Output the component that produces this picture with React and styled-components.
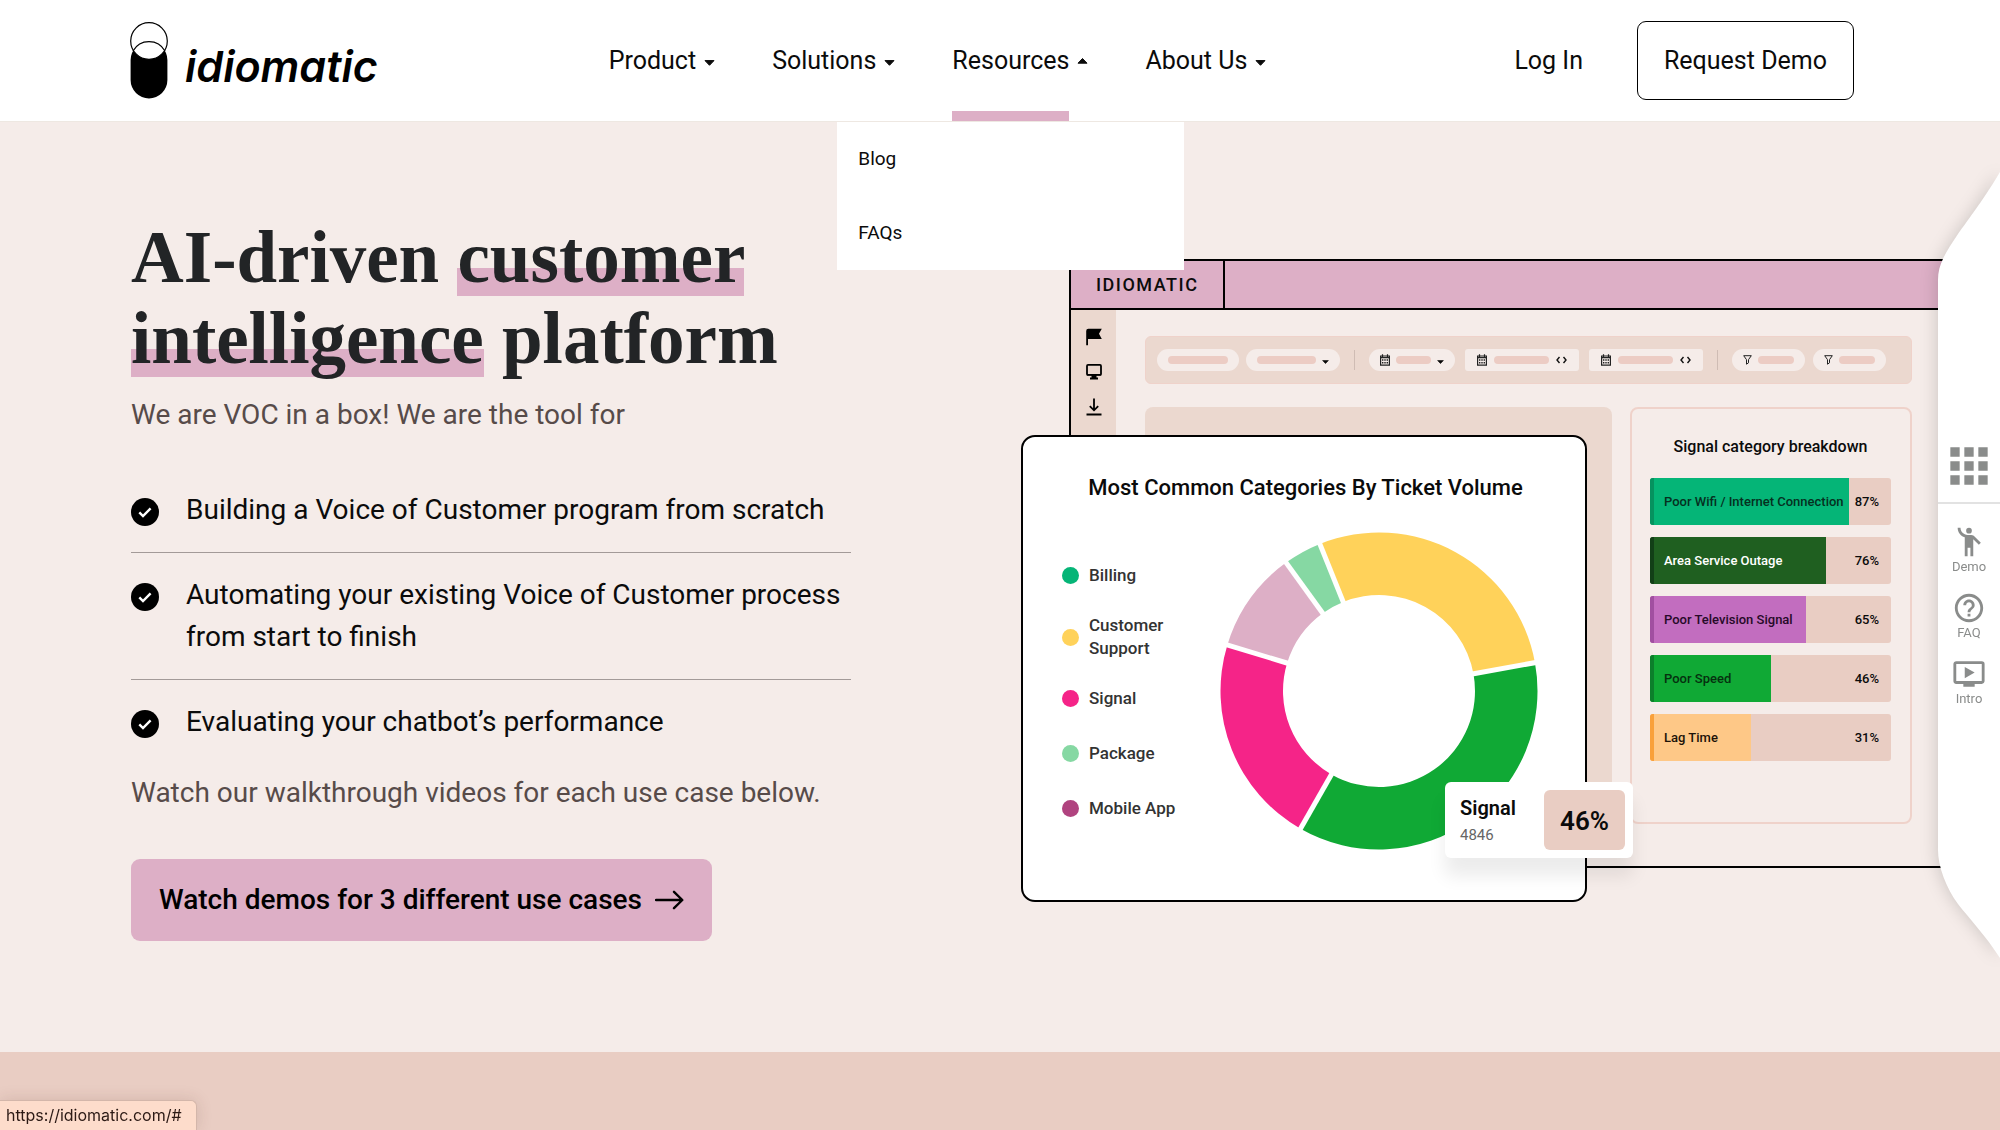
import React, { useState } from 'react';
import styled, { createGlobalStyle, css } from 'styled-components';
import { MdApps, MdEmojiPeople, MdHelpOutline, MdOndemandVideo } from 'react-icons/md';

const colors = {
    ink: '#0b0b0b',
    heading: '#222426',
    muted: '#574b49',
    pink: '#ddafc6',
    blush: '#f5ece9',
    sand: '#ebd8cf',
    rose: '#e9cdc3',
    roseLine: '#efd2ca',
    widget: '#8a8c8b',
};

const GlobalStyle = createGlobalStyle`
    *, *::before, *::after {
        box-sizing: border-box;
    }
    body {
        margin: 0;
        font-family: Roboto, sans-serif;
        color: ${colors.ink};
        background: ${colors.rose};
        overflow-x: hidden;
    }
    button {
        font: inherit;
        color: inherit;
        background: none;
        border: 0;
        padding: 0;
        cursor: pointer;
    }
    a {
        color: inherit;
        text-decoration: none;
    }
    svg {
        display: block;
    }
`;

const Page = styled.div`
    min-height: 100vh;
    display: flex;
    flex-direction: column;
`;

/* header */
const Header = styled.header`
    display: flex;
    align-items: center;
    height: 122px;
    padding: 0 146px 0 130px;
    background: #fff;
    border-bottom: 1px solid #eee8e2;
`;
const Logo = styled.a`
    display: flex;
    align-items: center;
    gap: 17px;
`;
const LogoText = styled.span`
    font-family: Inter, sans-serif;
    font-size: 43px;
    font-weight: 600;
    font-style: italic;
    font-feature-settings: 'cv11';
    line-height: 64px;
    padding-top: 11px;
    color: #000;
`;
const Nav = styled.nav`
    display: flex;
    align-self: stretch;
    gap: 57px;
    margin-left: 231px;
`;
const NavItem = styled.div`
    position: relative;
    display: flex;
`;
const NavButton = styled.button`
    display: flex;
    align-items: center;
    gap: 8px;
    font-size: 25px;
`;
const NavLabel = styled.span`
    display: flex;
    align-items: center;
    height: 121px;
    border-top: 10px solid transparent;
    border-bottom: 10px solid transparent;
    ${props => props.$open && css`
        border-bottom-color: ${colors.pink};
    `}
`;
const Dropdown = styled.div`
    position: absolute;
    z-index: 5;
    top: 122px;
    left: -115px;
    width: 347px;
    display: flex;
    flex-direction: column;
    background: #fff;
`;
const DropdownLink = styled.a`
    padding: 0 21px;
    font-size: 19px;
    line-height: 74px;
`;
const Actions = styled.div`
    display: flex;
    align-items: center;
    gap: 54px;
    margin-left: auto;
    font-size: 25px;
`;
const DemoLink = styled.a`
    padding: 0 26px;
    line-height: 77px;
    border: 1px solid #000;
    border-radius: 9px;
`;

/* hero */
const Hero = styled.main`
    display: flex;
    align-items: flex-start;
    padding: 95px 0 111px 131px;
    background: ${colors.blush};
    overflow: hidden;
`;
const Intro = styled.section`
    flex: 0 0 720px;
    font-size: 28px;
    line-height: 42px;
`;
const Title = styled.h1`
    margin: 0;
    font-family: 'Liberation Serif', serif;
    font-size: 73px;
    font-weight: 700;
    line-height: 81px;
    color: ${colors.heading};
`;
const Mark = styled.span`
    background: linear-gradient(transparent 63%, ${colors.pink} 63%, ${colors.pink} 97%, transparent 97%);
`;
const Lead = styled.p`
    margin: ${props => props.$top}px 0 0;
    color: ${colors.muted};
`;
const CheckList = styled.ul`
    margin: 32px 0 0;
    padding: 0;
    list-style: none;
`;
const CheckItem = styled.li`
    display: flex;
    gap: 27px;
    padding: 21px 0;
    border-bottom: 1px solid #a39a98;
    svg {
        flex: none;
        margin-top: 9px;
    }
    &:last-child {
        border-bottom: 0;
        padding-bottom: 0;
    }
`;
const WatchLink = styled.a`
    display: inline-flex;
    align-items: center;
    gap: 13px;
    margin-top: 45px;
    padding: 20px 28px;
    font-weight: 500;
    color: #000;
    background: ${colors.pink};
    border-radius: 9px;
`;

/* product preview */
const Preview = styled.section`
    position: relative;
    flex: 1;
    margin: 42px 0 0 170px;
    padding-left: 48px;
`;
const Window = styled.div`
    border: 2px solid #000;
    border-right: 0;
`;
const TitleBar = styled.div`
    height: 49px;
    background: ${colors.pink};
    border-bottom: 2px solid #000;
`;
const TitleTab = styled.div`
    width: 154px;
    padding-left: 25px;
    font-size: 18px;
    font-weight: 500;
    letter-spacing: 1.5px;
    line-height: 47px;
    border-right: 2px solid #000;
`;
const WindowBody = styled.div`
    display: flex;
`;
const SideRail = styled.div`
    width: 45px;
    padding-top: 18px;
    display: flex;
    flex-direction: column;
    align-items: center;
    gap: 17px;
    background: ${colors.sand};
`;
const WindowMain = styled.div`
    flex: 1;
    padding: 26px 88px 42px 29px;
`;
const Toolbar = styled.div`
    display: flex;
    align-items: center;
    height: 48px;
    padding: 0 11px;
    background: ${colors.sand};
    border: 1px solid ${colors.roseLine};
    border-radius: 6px;
`;
const PillGroup = styled.div`
    display: flex;
    gap: ${props => props.$gap}px;
`;
const Divider = styled.span`
    width: 1px;
    height: 20px;
    margin: 0 14px;
    background: #cfbcb4;
`;
const Pill = styled.span`
    display: flex;
    align-items: center;
    gap: 6px;
    height: 22px;
    padding: 0 11px;
    background: ${colors.blush};
    border-radius: 11px;
    ${props => props.$square && css`
        gap: 7px;
        padding: 0 12px;
        border-radius: 3px;
    `}
`;
const PillLine = styled.span`
    width: ${props => props.$width}px;
    height: 8px;
    background: #ecccc4;
    border-radius: 4px;
`;
const Panels = styled.div`
    display: flex;
    gap: 18px;
    margin-top: 23px;
`;
const BlankPanel = styled.div`
    flex: 1;
    background: ${colors.sand};
    border-radius: 8px;
`;
const Breakdown = styled.div`
    width: 282px;
    padding: 24px 19px 61px 18px;
    border: 2px solid ${colors.roseLine};
    border-radius: 8px;
`;
const BreakdownTitle = styled.h3`
    margin: 0 0 17px;
    font-size: 16px;
    font-weight: 500;
    line-height: 28px;
    text-align: center;
`;
const Bars = styled.div`
    display: flex;
    flex-direction: column;
    gap: 12px;
`;
const BarRow = styled.div`
    display: flex;
    justify-content: space-between;
    align-items: center;
    height: 47px;
    padding-right: 12px;
    font-size: 13px;
    font-weight: 500;
    background: ${colors.rose};
    border-radius: 3px;
    overflow: hidden;
`;
const BarFill = styled.div`
    flex: none;
    padding-left: 10px;
    line-height: 47px;
    white-space: nowrap;
    color: ${props => props.$text};
    background: ${props => props.$color};
    border-left: 4px solid ${props => props.$edge};
`;

/* chart card */
const ChartCard = styled.div`
    position: absolute;
    top: 176px;
    left: 0;
    width: 566px;
    padding: 35px 36px 50px 39px;
    background: #fff;
    border: 2px solid #000;
    border-radius: 14px;
`;
const CardTitle = styled.h2`
    margin: 0;
    font-size: 22px;
    font-weight: 500;
    line-height: 32px;
    text-align: center;
    white-space: nowrap;
`;
const ChartRow = styled.div`
    display: flex;
    justify-content: space-between;
    margin-top: 28px;
    padding-right: 11px;
`;
const Legend = styled.ul`
    display: flex;
    flex-direction: column;
    gap: 22px;
    margin: 0;
    padding: 27px 0 0;
    list-style: none;
`;
const LegendItem = styled.li`
    display: flex;
    align-items: center;
    gap: 10px;
    width: 132px;
    min-height: 33px;
    font-size: 17px;
    font-weight: 500;
    line-height: 23px;
    color: #333;
    &::before {
        content: '';
        flex: none;
        width: 17px;
        height: 17px;
        border-radius: 50%;
        background: ${props => props.$color};
    }
`;
const Callout = styled.div`
    position: absolute;
    top: 523px;
    left: 424px;
    display: flex;
    justify-content: space-between;
    width: 188px;
    padding: 8px 8px 8px 15px;
    background: #fff;
    border-radius: 6px;
    box-shadow: 0 18px 18px rgba(0, 0, 0, 0.08);
`;
const CalloutText = styled.div`
    padding-top: 5px;
    font-size: 20px;
    font-weight: 600;
    line-height: 26px;
    small {
        display: block;
        padding-top: 1px;
        font-size: 15px;
        font-weight: 400;
        color: #666;
    }
`;
const CalloutValue = styled.div`
    width: 81px;
    padding-top: 2px;
    font-size: 26px;
    font-weight: 600;
    line-height: 58px;
    text-align: center;
    background: ${colors.rose};
    border-radius: 6px;
`;

/* floating helper */
const Helper = styled.aside`
    position: fixed;
    z-index: 6;
    top: 172px;
    right: 0;
    width: 62px;
    color: ${colors.widget};
    filter: drop-shadow(-2px 0 8px rgba(0, 0, 0, 0.15));
`;
const HelperBody = styled.div`
    display: flex;
    flex-direction: column;
    background: #fff;
    padding: 158px 0 127px;
`;
const AppsButton = styled.button`
    display: flex;
    justify-content: center;
    padding-bottom: 8px;
    margin-bottom: 21px;
    border-bottom: 2px solid #e2e2e2;
`;
const HelperButton = styled.button`
    display: flex;
    flex-direction: column;
    align-items: center;
    height: 66px;
    font-size: 13px;
    line-height: 16px;
`;
const StatusBar = styled.div`
    position: fixed;
    z-index: 7;
    left: 0;
    bottom: 0;
    padding: 0 14px 0 6px;
    font-family: Inter, sans-serif;
    font-size: 16px;
    line-height: 29px;
    color: #2c1a15;
    background: #fddccb;
    border: 1px solid #d3b6aa;
    border-width: 1px 1px 0 0;
    border-radius: 0 6px 0 0;
    box-shadow: 0 0 16px rgba(80, 40, 30, 0.15);
`;

const LogoMark = () => (
    <svg width="38" height="77" viewBox="0 0 38 77" aria-hidden="true">
        <path d="M.6 38a18.4 18.4 0 0 1 36.8 0v20a18.4 18.4 0 0 1-36.8 0Z" fill="#000" />
        <circle cx="19" cy="19" r="18.3" fill="#fff" stroke="#000" strokeWidth="1.2" />
        <path d="M3 29A18.3 18.3 0 0 1 35 29" fill="none" stroke="#000" strokeWidth="1.2" />
    </svg>
);

const Caret = ({ up, size = 11 }) => (
    <svg width={size} height={size} viewBox="0 0 11 11" aria-hidden="true">
        {up
            ? <path d="M5.5 3.5 10 8.2H1Z" fill="currentColor" stroke="currentColor" strokeLinejoin="round" />
            : <path d="M5.5 10.3 10 5.6H1Z" fill="currentColor" stroke="currentColor" strokeLinejoin="round" />}
    </svg>
);

const Check = () => (
    <svg width="28" height="28" viewBox="0 0 28 28" aria-hidden="true">
        <circle cx="14" cy="14" r="14" fill="#000" />
        <path d="m8.3 14.3 3.7 3.7 7.6-7.6" fill="none" stroke="#fff" strokeWidth="2.4" />
    </svg>
);

const Arrow = () => (
    <svg width="29" height="20" viewBox="0 0 29 20" aria-hidden="true">
        <path d="M1 10h26M19 1.8 27.3 10 19 18.2" fill="none" stroke="#000" strokeWidth="2.4" strokeLinecap="round" strokeLinejoin="round" />
    </svg>
);

const Calendar = () => (
    <svg width="10" height="12" viewBox="0 0 10 12" aria-hidden="true">
        <path d="M.6 2h8.8v9.2H.6ZM2.5.3V3M7.5.3V3M.6 3.6h8.8" fill="none" stroke="#222" strokeWidth="1.2" />
        <path d="M2 6h6M2 8.7h6" stroke="#222" strokeWidth="1.4" strokeDasharray="1.4 .9" />
    </svg>
);

const Code = () => (
    <svg width="11" height="8" viewBox="0 0 11 8" aria-hidden="true">
        <path d="M3.5 1 1 4l2.5 3M7.5 1 10 4 7.5 7" fill="none" stroke="#111" strokeWidth="1.4" />
    </svg>
);

const Funnel = () => (
    <svg width="9" height="10" viewBox="0 0 9 10" aria-hidden="true">
        <path d="M.7.7h7.6L5.5 4.7v3.1L3.5 9.2V4.7Z" fill="none" stroke="#222" strokeWidth="1" strokeLinejoin="round" />
    </svg>
);

const Flag = () => (
    <svg width="16" height="18" viewBox="0 0 16 18" aria-hidden="true">
        <path d="M.2 17.2V3Q.2.8 2.4.8H15.8L13 5.8l2.800 5.200H2v6.200Z" fill="#000" />
    </svg>
);

const Monitor = () => (
    <svg width="16" height="18" viewBox="0 0 16 18" aria-hidden="true">
        <rect x="1" y="1.9" width="14" height="10" rx="1" fill="none" stroke="#000" strokeWidth="1.8" />
        <path d="M1 11h14v1.500H10.500V14.500H12V16.500H4V14.500H5.500V12.500H1Z" fill="#000" />
    </svg>
);

const Download = () => (
    <svg width="16" height="18" viewBox="0 0 16 18" aria-hidden="true">
        <path d="M8 .5v11M3.8 8.2 8 12.3l4.2-4.1M.5 16.5h15" fill="none" stroke="#000" strokeWidth="1.8" />
    </svg>
);

const slices = [
    { from: -21.9, to: 79.7, color: '#ffd25a' },
    { from: 79.7, to: 209.7, color: '#10a935' },
    { from: 209.7, to: 286.9, color: '#f52488' },
    { from: 286.9, to: 324.1, color: '#ddafc6' },
    { from: 324.1, to: 338.1, color: '#86d8a3' },
];

const point = (angle, r) => {
    const a = angle * Math.PI / 180;
    return `${(159 + r * Math.sin(a)).toFixed(2)} ${(159 - r * Math.cos(a)).toFixed(2)}`;
};

const slicePath = ({ from, to }) => {
    const large = to - from > 180 ? 1 : 0;
    return `M${point(from, 158.5)}A158.5 158.5 0 ${large} 1 ${point(to, 158.5)}L${point(to, 96)}A96 96 0 ${large} 0 ${point(from, 96)}Z`;
};

const Donut = () => (
    <svg width="318" height="318" viewBox="0 0 318 318" role="img" aria-label="Ticket volume by category">
        {slices.map(s => <path key={s.color} d={slicePath(s)} fill={s.color} />)}
        {slices.map(s => (
            <path key={s.color} d={`M${point(s.from, 92)}L${point(s.from, 164)}`} stroke="#fff" strokeWidth="5" />
        ))}
    </svg>
);

const menu = ['Product', 'Solutions', 'Resources', 'About Us'];

const legend = [
    ['Billing', '#05b577'],
    ['Customer Support', '#ffd25a'],
    ['Signal', '#f52488'],
    ['Package', '#86d8a3'],
    ['Mobile App', '#b0437f'],
];

const signals = [
    { label: 'Poor Wifi / Internet Connection', value: '87%', width: 87, color: '#05b577', edge: '#06925f', text: '#06301f' },
    { label: 'Area Service Outage', value: '76%', width: 77, color: '#1f5f20', edge: '#123f17', text: '#fff' },
    { label: 'Poor Television Signal', value: '65%', width: 68, color: '#c26dbf', edge: '#a04fa0', text: '#260a28' },
    { label: 'Poor Speed', value: '46%', width: 53, color: '#10a935', edge: '#0c7f2b', text: '#06300f' },
    { label: 'Lag Time', value: '31%', width: 44, color: '#fec887', edge: '#f9a03a', text: '#1c1208' },
];

const SiteHeader = () => {
    const [open, setOpen] = useState('Resources');
    return (
        <Header>
            <Logo href="#" aria-label="idiomatic">
                <LogoMark />
                <LogoText>idiomatic</LogoText>
            </Logo>
            <Nav>
                {menu.map(name => (
                    <NavItem key={name}>
                        <NavButton aria-expanded={open === name} onClick={() => setOpen(open === name ? '' : name)}>
                            <NavLabel $open={open === name}>{name}</NavLabel>
                            <Caret up={open === name} />
                        </NavButton>
                        {name === 'Resources' && open === name && (
                            <Dropdown>
                                <DropdownLink href="#">Blog</DropdownLink>
                                <DropdownLink href="#">FAQs</DropdownLink>
                            </Dropdown>
                        )}
                    </NavItem>
                ))}
            </Nav>
            <Actions>
                <a href="#">Log In</a>
                <DemoLink href="#">Request Demo</DemoLink>
            </Actions>
        </Header>
    );
};

const FilterBar = () => (
    <Toolbar>
        <PillGroup $gap={7}>
            <Pill><PillLine $width={60} /></Pill>
            <Pill><PillLine $width={59} /><Caret size={7} /></Pill>
        </PillGroup>
        <Divider />
        <PillGroup $gap={10}>
            <Pill><Calendar /><PillLine $width={35} /><Caret size={7} /></Pill>
            <Pill $square><Calendar /><PillLine $width={55} /><Code /></Pill>
            <Pill $square><Calendar /><PillLine $width={55} /><Code /></Pill>
        </PillGroup>
        <Divider />
        <PillGroup $gap={8}>
            <Pill><Funnel /><PillLine $width={36} /></Pill>
            <Pill><Funnel /><PillLine $width={36} /></Pill>
        </PillGroup>
    </Toolbar>
);

const ProductPreview = () => (
    <Preview>
        <Window>
            <TitleBar><TitleTab>IDIOMATIC</TitleTab></TitleBar>
            <WindowBody>
                <SideRail>
                    <Flag />
                    <Monitor />
                    <Download />
                </SideRail>
                <WindowMain>
                    <FilterBar />
                    <Panels>
                        <BlankPanel />
                        <Breakdown>
                            <BreakdownTitle>Signal category breakdown</BreakdownTitle>
                            <Bars>
                                {signals.map(s => (
                                    <BarRow key={s.label}>
                                        <BarFill $color={s.color} $edge={s.edge} $text={s.text} style={{ width: `${s.width}%` }}>
                                            {s.label}
                                        </BarFill>
                                        <span>{s.value}</span>
                                    </BarRow>
                                ))}
                            </Bars>
                        </Breakdown>
                    </Panels>
                </WindowMain>
            </WindowBody>
        </Window>
        <ChartCard>
            <CardTitle>Most Common Categories By Ticket Volume</CardTitle>
            <ChartRow>
                <Legend>
                    {legend.map(([label, color]) => <LegendItem key={label} $color={color}>{label}</LegendItem>)}
                </Legend>
                <Donut />
            </ChartRow>
        </ChartCard>
        <Callout>
            <CalloutText>Signal<small>4846</small></CalloutText>
            <CalloutValue>46%</CalloutValue>
        </Callout>
    </Preview>
);

const HelperWidget = () => (
    <Helper>
        <svg width="62" height="108" viewBox="0 0 62 108" aria-hidden="true">
            <path d="M62 0C48 24 30 48 20 62 8 80 0 92 0 108H62Z" fill="#fff" />
        </svg>
        <HelperBody>
            <AppsButton aria-label="Apps"><MdApps size={56} /></AppsButton>
            <HelperButton><MdEmojiPeople size={34} />Demo</HelperButton>
            <HelperButton><MdHelpOutline size={34} />FAQ</HelperButton>
            <HelperButton><MdOndemandVideo size={34} />Intro</HelperButton>
        </HelperBody>
        <svg width="62" height="108" viewBox="0 0 62 108" aria-hidden="true">
            <path d="M0 0C0 16 8 38 20 54 30 67 48 86 62 108V0Z" fill="#fff" />
        </svg>
    </Helper>
);

const App = () => (
    <Page>
        <GlobalStyle />
        <SiteHeader />
        <Hero>
            <Intro>
                <Title>AI-driven <Mark>customer</Mark> <Mark>intelligence</Mark> platform</Title>
                <Lead $top={15}>We are VOC in a box! We are the tool for</Lead>
                <CheckList>
                    <CheckItem><Check />Building a Voice of Customer program from scratch</CheckItem>
                    <CheckItem><Check />Automating your existing Voice of Customer process from start to finish</CheckItem>
                    <CheckItem><Check />Evaluating your chatbot’s performance</CheckItem>
                </CheckList>
                <Lead $top={29}>Watch our walkthrough videos for each use case below.</Lead>
                <WatchLink href="#">Watch demos for 3 different use cases <Arrow /></WatchLink>
            </Intro>
            <ProductPreview />
        </Hero>
        <HelperWidget />
        <StatusBar>https://idiomatic.com/#</StatusBar>
    </Page>
);

export default App;
